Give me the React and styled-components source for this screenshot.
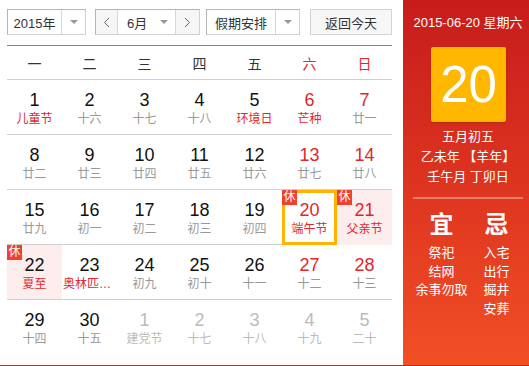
import React from "react";
import styled, { createGlobalStyle, css } from "styled-components";

const FONT = `"Liberation Sans", Arial, "Noto Sans CJK SC", sans-serif`;
const RED = "#e3262b";
const GREY = "#999";
const LIGHT = "#bbb";

const Global = createGlobalStyle`
  html, body { margin: 0; padding: 0; background: #fff; }
  body { font-family: ${FONT}; }
`;

const Widget = styled.div`
  display: flex;
  width: 529px;
  height: 365px;
  border-bottom: 1px solid #c32a20;
  overflow: hidden;
`;

const Main = styled.div`
  width: 385px;
  padding: 9px 11px 0 7px;
  display: flex;
  flex-direction: column;
`;

const Toolbar = styled.div`
  display: flex;
  height: 26px;
  margin-bottom: 10px;
`;

const SelectBox = styled.div`
  display: flex;
  box-sizing: border-box;
  width: ${(p) => p.$w}px;
  margin-right: ${(p) => p.$mr || 0}px;
  height: 26px;
  border: 1px solid #ccc;
  border-color: #b5b5b5 #d0d0d0 #d0d0d0 #b5b5b5;
  background: #fff;
`;

const SelectText = styled.div`
  flex: 1;
  display: flex;
  align-items: center;
  justify-content: center;
  font-size: 13px;
  color: #333;
  white-space: nowrap;
  border-right: 1px solid #d6d6d6;
`;

const ArrowCell = styled.div`
  width: ${(p) => p.$w || 23}px;
  display: flex;
  align-items: center;
  justify-content: center;
`;

const Caret = styled.span`
  width: 0;
  height: 0;
  border-left: 4px solid transparent;
  border-right: 4px solid transparent;
  border-top: 4px solid #999;
`;

const NavBtn = styled.div`
  width: ${(p) => p.$w}px;
  flex: none;
  display: flex;
  align-items: center;
  justify-content: center;
  background: #f6f6f6;
  ${(p) => p.$side === "left" ? css`border-right: 1px solid #d6d6d6;` : css`border-left: 1px solid #d6d6d6;`}
`;

const MonthInner = styled.div`
  flex: 1;
  display: flex;
  align-items: center;
  justify-content: space-between;
  font-size: 13px;
  color: #333;
  white-space: nowrap;
  padding: 0 7px 0 9px;
`;

const TodayBtn = styled.div`
  box-sizing: border-box;
  width: 82px;
  height: 26px;
  margin-left: 10px;
  border: 1px solid #d3d3d3;
  background: #f7f7f7;
  display: flex;
  align-items: center;
  justify-content: center;
  font-size: 13px;
  color: #333;
`;

const HeadRow = styled.div`
  display: grid;
  grid-template-columns: repeat(7, 55px);
  height: 33px;
  border-top: 1px solid #e25c51;
  border-bottom: 1px solid #cfcfcf;
`;

const HeadCell = styled.div`
  display: flex;
  align-items: center;
  justify-content: center;
  font-size: 14px;
  color: ${(p) => (p.$weekend ? RED : "#333")};
`;

const WeekRow = styled.div`
  display: grid;
  grid-template-columns: repeat(7, 55px);
  height: 54px;
  border-bottom: ${(p) => (p.$last ? "none" : "1px solid #cfcfcf")};
`;

const Cell = styled.div`
  position: relative;
  box-sizing: border-box;
  display: flex;
  flex-direction: column;
  align-items: center;
  padding-top: 9px;
  background: ${(p) => (p.$rest ? "#fdeded" : "transparent")};
  ${(p) =>
    p.$today &&
    css`
      border: 3px solid #ffb400;
      padding-top: 6px;
      height: 55px;
    `}
`;

const DayNum = styled.div`
  font-size: 18px;
  line-height: 22px;
  color: ${(p) => p.$c};
`;

const Lunar = styled.div`
  font-size: 12px;
  line-height: 16px;
  color: ${(p) => p.$c};
  max-width: 53px;
  white-space: nowrap;
  overflow: hidden;
  text-overflow: ellipsis;
`;

const Badge = styled.span`
  position: absolute;
  left: ${(p) => (p.$today ? -3 : 0)}px;
  top: ${(p) => (p.$today ? -3 : 0)}px;
  width: 15px;
  height: 15px;
  background: #f0402f;
  color: #fff;
  font-size: 12px;
  line-height: 15px;
  text-align: center;
`;

const Side = styled.div`
  width: 126px;
  background: linear-gradient(180deg, #c71c1b 0%, #dd3420 50%, #f24f25 100%);
  color: #fff;
  display: flex;
  flex-direction: column;
`;

const SideDate = styled.div`
  margin-top: 14px;
  line-height: 18px;
  font-size: 13px;
  text-align: center;
  padding-left: 4px;
`;

const BigDay = styled.div`
  width: 75px;
  height: 75px;
  margin: 15px 0 0 28px;
  background: #ffb700;
  border-radius: 2px;
  box-shadow: 0 1px 2px rgba(120, 30, 0, 0.35);
  display: flex;
  align-items: center;
  justify-content: center;
  font-size: 51px;
  color: #fff;
`;

const LunarInfo = styled.div`
  margin-top: 5px;
  font-size: 13px;
  line-height: 20px;
  text-align: center;
  padding-left: 4px;
`;

const Divider = styled.div`
  height: 2px;
  margin: 10px 6px 0 10px;
  background: rgba(255, 255, 255, 0.35);
`;

const YiJi = styled.div`
  display: grid;
  grid-template-columns: 55px 55px;
  padding-left: 11px;
  margin-top: 11px;
`;

const YiJiCol = styled.div`
  display: flex;
  flex-direction: column;
  align-items: center;
`;

const YiJiTitle = styled.div`
  font-size: 24px;
  font-weight: bold;
  line-height: 30px;
  margin-bottom: 4px;
`;

const Item = styled.div`
  font-size: 13px;
  line-height: 18.5px;
  white-space: nowrap;
`;

const weeks = [
  [
    [1, "儿童节", "n", "r"],
    [2, "十六"],
    [3, "十七"],
    [4, "十八"],
    [5, "环境日", "n", "r"],
    [6, "芒种", "r", "r"],
    [7, "廿一", "r"],
  ],
  [
    [8, "廿二"],
    [9, "廿三"],
    [10, "廿四"],
    [11, "廿五"],
    [12, "廿六"],
    [13, "廿七", "r"],
    [14, "廿八", "r"],
  ],
  [
    [15, "廿九"],
    [16, "初一"],
    [17, "初二"],
    [18, "初三"],
    [19, "初四"],
    [20, "端午节", "r", "r", { today: true, badge: true }],
    [21, "父亲节", "r", "r", { rest: true, badge: true }],
  ],
  [
    [22, "夏至", "n", "r", { rest: true, badge: true }],
    [23, "奥林匹克日", "n", "r"],
    [24, "初九"],
    [25, "初十"],
    [26, "十一"],
    [27, "十二", "r"],
    [28, "十三", "r"],
  ],
  [
    [29, "十四"],
    [30, "十五"],
    [1, "建党节", "g", "g"],
    [2, "十七", "g", "g"],
    [3, "十八", "g", "g"],
    [4, "十九", "g", "g"],
    [5, "二十", "g", "g"],
  ],
];

const numColor = { n: "#111", r: RED, g: LIGHT };
const lunarColor = { n: GREY, r: RED, g: LIGHT };

const heads = ["一", "二", "三", "四", "五", "六", "日"];

export default function App() {
  return (
    <>
      <Global />
      <Widget>
        <Main>
          <Toolbar>
            <SelectBox $w={79} $mr={9}>
              <SelectText>2015年</SelectText>
              <ArrowCell>
                <Caret />
              </ArrowCell>
            </SelectBox>
            <SelectBox $w={105} $mr={6}>
              <NavBtn $w={21} $side="left">
                <svg width="7" height="11" viewBox="0 0 7 11">
                  <path d="M6 1 L1.5 5.5 L6 10" fill="none" stroke="#666" strokeWidth="1" />
                </svg>
              </NavBtn>
              <MonthInner>
                <span>6月</span>
                <Caret />
              </MonthInner>
              <NavBtn $w={23} $side="right">
                <svg width="7" height="11" viewBox="0 0 7 11">
                  <path d="M1 1 L5.5 5.5 L1 10" fill="none" stroke="#666" strokeWidth="1" />
                </svg>
              </NavBtn>
            </SelectBox>
            <SelectBox $w={94}>
              <SelectText>假期安排</SelectText>
              <ArrowCell>
                <Caret />
              </ArrowCell>
            </SelectBox>
            <TodayBtn>返回今天</TodayBtn>
          </Toolbar>
          <HeadRow>
            {heads.map((h, i) => (
              <HeadCell key={h} $weekend={i >= 5}>
                {h}
              </HeadCell>
            ))}
          </HeadRow>
          {weeks.map((w, wi) => (
            <WeekRow key={wi} $last={wi === weeks.length - 1}>
              {w.map(([d, l, nc = "n", lc = "n", f = {}], di) => (
                <Cell key={di} $rest={f.rest} $today={f.today}>
                  {f.badge && <Badge $today={f.today}>休</Badge>}
                  <DayNum $c={numColor[nc]}>{d}</DayNum>
                  <Lunar $c={lunarColor[lc]}>{l}</Lunar>
                </Cell>
              ))}
            </WeekRow>
          ))}
        </Main>
        <Side>
          <SideDate>2015-06-20 星期六</SideDate>
          <BigDay>20</BigDay>
          <LunarInfo>
            <div>五月初五</div>
            <div>乙未年 【羊年】</div>
            <div>壬午月 丁卯日</div>
          </LunarInfo>
          <Divider />
          <YiJi>
            <YiJiCol>
              <YiJiTitle>宜</YiJiTitle>
              <Item>祭祀</Item>
              <Item>结网</Item>
              <Item>余事勿取</Item>
            </YiJiCol>
            <YiJiCol>
              <YiJiTitle>忌</YiJiTitle>
              <Item>入宅</Item>
              <Item>出行</Item>
              <Item>掘井</Item>
              <Item>安葬</Item>
            </YiJiCol>
          </YiJi>
        </Side>
      </Widget>
    </>
  );
}
